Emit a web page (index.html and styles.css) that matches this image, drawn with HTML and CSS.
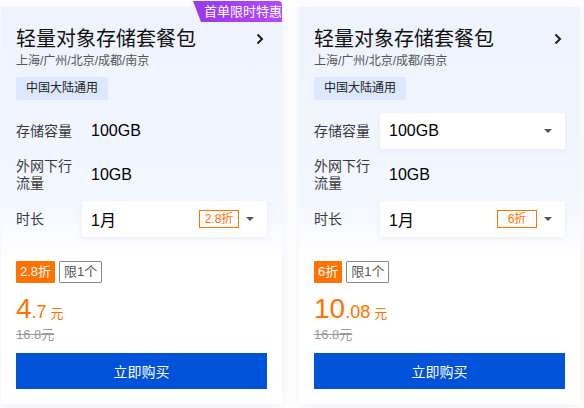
FILE: index.html
```html
<!DOCTYPE html>
<html lang="zh-CN">
<head>
<meta charset="utf-8">
<title>轻量对象存储套餐包</title>
<link rel="stylesheet" href="styles.css">
</head>
<body>
<div class="page">
  <div class="card">
    <div class="badge">首单限时特惠</div>
    <div class="head">
      <div class="title">轻量对象存储套餐包</div>
      <svg class="chev" width="8" height="12" viewBox="0 0 8 12"><path d="M1.5 1.5 L6 6 L1.5 10.5" fill="none" stroke="#1f1f1f" stroke-width="2"/></svg>
    </div>
    <div class="sub">上海/广州/北京/成都/南京</div>
    <div class="region">中国大陆通用</div>
    <div class="rows">
      <div class="row"><div class="label">存储容量</div><div class="value">100GB</div></div>
      <div class="row tall"><div class="label">外网下行流量</div><div class="value">10GB</div></div>
      <div class="row"><div class="label">时长</div>
        <div class="select"><span class="sel-text">1月</span><span class="disc">2.8折</span><span class="arrow"></span></div>
      </div>
    </div>
    <div class="tags"><span class="tag-fill">2.8折</span><span class="tag-line">限1个</span></div>
    <div class="price"><span class="int">4</span><span class="dec">.7</span><span class="unit">元</span></div>
    <div class="orig">16.8元</div>
    <button class="buy">立即购买</button>
  </div>
  <div class="card">
    <div class="head">
      <div class="title">轻量对象存储套餐包</div>
      <svg class="chev" width="8" height="12" viewBox="0 0 8 12"><path d="M1.5 1.5 L6 6 L1.5 10.5" fill="none" stroke="#1f1f1f" stroke-width="2"/></svg>
    </div>
    <div class="sub">上海/广州/北京/成都/南京</div>
    <div class="region">中国大陆通用</div>
    <div class="rows">
      <div class="row"><div class="label">存储容量</div>
        <div class="select"><span class="sel-text">100GB</span><span class="arrow"></span></div>
      </div>
      <div class="row tall"><div class="label">外网下行流量</div><div class="value">10GB</div></div>
      <div class="row"><div class="label">时长</div>
        <div class="select"><span class="sel-text">1月</span><span class="disc">6折</span><span class="arrow"></span></div>
      </div>
    </div>
    <div class="tags"><span class="tag-fill">6折</span><span class="tag-line">限1个</span></div>
    <div class="price"><span class="int">10</span><span class="dec">.08</span><span class="unit">元</span></div>
    <div class="orig">16.8元</div>
    <button class="buy">立即购买</button>
  </div>
</div>
</body>
</html>
```

FILE: styles.css
```css
* { box-sizing: border-box; }
html, body { margin: 0; padding: 0; background: #fff; }
body {
  font-family: "Liberation Sans", "Noto Sans CJK SC", sans-serif;
  color: #000;
  width: 584px;
  height: 408px;
  overflow: hidden;
}
.page {
  display: flex;
  gap: 17px;
  padding: 7px 0 0 1px;
}
.card {
  position: relative;
  width: 281px;
  height: 397px;
  padding: 19px 15px 15px 15px;
  background: linear-gradient(180deg, #eef3fe 0%, #f3f7ff 50%, #ffffff 64%, #ffffff 100%);
  box-shadow: 0 2px 12px rgba(70, 100, 160, 0.10);
  display: flex;
  flex-direction: column;
  align-items: flex-start;
}
.badge {
  position: absolute;
  top: -6px;
  right: 0;
  width: 89px;
  height: 21px;
  padding-left: 11px;
  background: linear-gradient(90deg, #9a37ee 0%, #b04cf7 100%);
  color: #fff;
  font-size: 13px;
  line-height: 21px;
  border-top-right-radius: 4px;
  clip-path: polygon(0 0, 100% 0, 100% 100%, 8px 100%);
}
.head {
  width: 100%;
  display: flex;
  justify-content: space-between;
  align-items: center;
}
.title {
  font-size: 20px;
  line-height: 26px;
  color: #111;
}
.chev { margin-right: 3px; }
.sub {
  font-size: 12px;
  line-height: 18px;
  color: #555;
}
.region {
  margin-top: 7px;
  height: 23px;
  padding: 0 10px;
  background: #dce8fd;
  border-radius: 2px;
  font-size: 12px;
  line-height: 23px;
  color: #222;
}
.rows {
  width: 100%;
  margin-top: 13px;
  display: flex;
  flex-direction: column;
  gap: 4px;
}
.row {
  height: 36px;
  display: flex;
  align-items: center;
}
.row.tall { height: 44px; }
.label {
  width: 66px;
  flex: none;
  font-size: 14px;
  line-height: 17px;
  color: #3a3a3a;
  padding-right: 8px;
}
.value {
  padding-left: 9px;
  font-size: 16px;
  color: #000;
}
.select {
  flex: 1;
  height: 36px;
  display: flex;
  align-items: center;
  padding: 0 13px 0 9px;
  background: #fff;
  border-radius: 2px;
  box-shadow: 0 2px 6px rgba(60, 90, 150, 0.08);
}
.sel-text {
  flex: 1;
  font-size: 16px;
  color: #000;
}
.disc {
  min-width: 40px;
  height: 18px;
  padding: 0 4px;
  border: 1px solid #ff7200;
  color: #ff7200;
  font-size: 12px;
  line-height: 16px;
  text-align: center;
  margin-right: 7px;
}
.arrow {
  width: 0;
  height: 0;
  border-left: 4px solid transparent;
  border-right: 4px solid transparent;
  border-top: 4px solid #4b5366;
}
.tags {
  margin-top: 24px;
  display: flex;
  gap: 4px;
}
.tag-fill, .tag-line {
  height: 22px;
  font-size: 13px;
  line-height: 20px;
  padding: 0 3px;
  border-radius: 1px;
}
.tag-fill {
  background: #ff7200;
  color: #fff;
  border: 1px solid #ff7200;
}
.tag-line {
  border: 1px solid #8a8a8a;
  color: #555;
  padding: 0 4px;
}
.price {
  margin-top: 9px;
  height: 34px;
  line-height: 34px;
  color: #ff7200;
  white-space: nowrap;
}
.int { font-size: 28px; }
.dec { font-size: 18px; }
.unit { font-size: 13px; margin-left: 4px; }
.orig {
  font-size: 13px;
  line-height: 18px;
  color: #999;
  text-decoration: line-through;
}
.buy {
  margin-top: 9px;
  width: 100%;
  height: 36px;
  border: none;
  border-radius: 0;
  background: #0052d9;
  color: #fff;
  font-family: "Liberation Sans", "Noto Sans CJK SC", sans-serif;
  font-size: 14px;
  cursor: pointer;
}
```
